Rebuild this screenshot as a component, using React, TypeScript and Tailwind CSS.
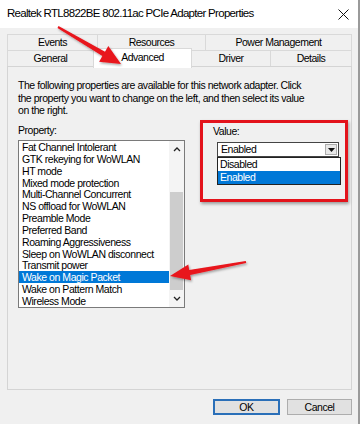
const properties = [
  "Fat Channel Intolerant",
  "GTK rekeying for WoWLAN",
  "HT mode",
  "Mixed mode protection",
  "Multi-Channel Concurrent",
  "NS offload for WoWLAN",
  "Preamble Mode",
  "Preferred Band",
  "Roaming Aggressiveness",
  "Sleep on WoWLAN disconnect",
  "Transmit power",
  "Wake on Magic Packet",
  "Wake on Pattern Match",
  "Wireless Mode",
];

const selected = "Wake on Magic Packet";

function Chevron({ down }: { down?: boolean }) {
  return (
    <svg width="8" height="5" viewBox="0 0 8 5">
      <path
        d={down ? "M1 1 L4 4 L7 1" : "M1 4 L4 1 L7 4"}
        fill="none"
        stroke="#222"
        strokeWidth="1.3"
      />
    </svg>
  );
}

export default function App() {
  return (
    <div className="relative w-[360px] h-[424px] overflow-hidden bg-[#f0f0f0] font-['Liberation_Sans',Arial,sans-serif] tracking-[-0.45px] text-black border-r-2 border-[#9a9a9a]">
      {/* title bar */}
      <div className="flex h-[28px] items-center justify-between bg-white pl-[7px] pr-[9px]">
        <span className="text-[11.5px] tracking-[-0.7px]">Realtek RTL8822BE 802.11ac PCIe Adapter Properties</span>
        <svg width="11" height="11" viewBox="0 0 11 11">
          <path d="M0.5 0.5 L10.5 10.5 M10.5 0.5 L0.5 10.5" stroke="#111" strokeWidth="1" />
        </svg>
      </div>

      {/* tabs */}
      <div className="mt-[6px] ml-[7px] w-[345px] text-[10.5px] leading-[15px] tracking-[-0.5px]">
        <div className="flex h-[16px]">
          <div className="w-[90px] border-l border-t border-[#d9d9d9] text-center">Events</div>
          <div className="w-[108px] border-l border-t border-[#d9d9d9] text-center">Resources</div>
          <div className="w-[147px] border-x border-t border-[#d9d9d9] text-center">Power Management</div>
        </div>
        <div className="flex h-[16px] items-start">
          <div className="h-[16px] w-[86px] border-l border-t border-[#d9d9d9] text-center">General</div>
          <div className="relative z-10 -mt-[2px] h-[20px] w-[99px] border-x border-t border-[#d9d9d9] bg-white pt-[1px] text-center">
            Advanced
          </div>
          <div className="h-[16px] w-[78px] border-t border-[#d9d9d9] text-center">Driver</div>
          <div className="h-[16px] w-[82px] border-x border-t border-[#d9d9d9] text-center">Details</div>
        </div>
      </div>

      {/* panel */}
      <div className="ml-[7px] h-[324px] w-[345px] border border-[#d4d4d4] bg-[#f0f0f0] pl-[10px] pt-[12px] text-[10.5px]">
        <div className="h-[41px] leading-[12.5px] whitespace-nowrap">
          The following properties are available for this network adapter. Click
          <br />
          the property you want to change on the left, and then select its value
          <br />
          on the right.
        </div>

        <div className="flex">
          <div className="w-[167px]">
            <div className="h-[20px] pt-[3px] leading-[14px]">Property:</div>
            <div className="flex h-[168px] border border-[#7a7a7a] bg-white">
              <div className="flex-1">
                {properties.map((p) => (
                  <div
                    key={p}
                    className={
                      p === selected
                        ? "h-[11.85px] bg-[#0078d7] pl-[3px] leading-[12px] text-white whitespace-nowrap"
                        : "h-[11.85px] pl-[3px] leading-[12px] whitespace-nowrap"
                    }
                  >
                    {p}
                  </div>
                ))}
              </div>
              <div className="flex w-[15px] flex-col bg-[#f4f4f4]">
                <div className="flex h-[17px] items-center justify-center">
                  <Chevron />
                </div>
                <div className="h-[34px]" />
                <div className="mx-[1px] h-[98px] bg-[#cdcdcd]" />
                <div className="flex-1" />
                <div className="flex h-[17px] items-center justify-center">
                  <Chevron down />
                </div>
              </div>
            </div>
          </div>

          <div className="ml-[15px] h-[82px] w-[148px] border-[3px] border-[#e3131b] pl-[10px] pt-[1px] shadow-[1px_2px_3px_rgba(0,0,0,0.35)]">
            <div className="leading-[14px]">Value:</div>
            <div className="ml-[4px] mt-[4px] flex h-[15px] w-[122px] border border-[#444] bg-white">
              <div className="flex-1 pl-[3px] leading-[13px]">Enabled</div>
              <div className="m-[1px] flex w-[12px] items-center justify-center border border-[#adadad] bg-[#e8e8e8]">
                <svg width="7" height="4" viewBox="0 0 7 4">
                  <path d="M0 0 L7 0 L3.5 4 Z" fill="#111" />
                </svg>
              </div>
            </div>
            <div className="ml-[4px] w-[124px] border border-[#222] bg-white">
              <div className="h-[13px] pl-[2px] leading-[13px]">Disabled</div>
              <div className="h-[13px] bg-[#0078d7] pl-[2px] leading-[13px] text-white">Enabled</div>
            </div>
          </div>
        </div>
      </div>

      {/* buttons */}
      <div className="mt-[9px] flex justify-end gap-[7px] pr-[6px] text-[10.5px]">
        <button className="h-[16px] w-[67px] border-2 border-[#2a6fb8] bg-[#e1e1e1] leading-[12px]">OK</button>
        <button className="h-[16px] w-[65px] border border-[#adadad] bg-[#e1e1e1] leading-[14px]">Cancel</button>
      </div>

      {/* annotation arrows */}
      <svg className="pointer-events-none absolute left-0 top-0 z-20" width="360" height="424" viewBox="0 0 360 424">
        <defs>
          <filter id="sh" x="-20%" y="-20%" width="140%" height="140%">
            <feDropShadow dx="1" dy="1.5" stdDeviation="1" floodColor="#000" floodOpacity="0.35" />
          </filter>
        </defs>
        <polygon
          filter="url(#sh)"
          fill="#e8141c"
          points="58.5,26.1 105,51.7 108.3,46.1 121,64 99.1,61.7 102.4,56.1 57.5,27.9"
        />
        <polygon
          filter="url(#sh)"
          fill="#e8141c"
          points="245.8,261 189.2,269.9 188.3,264.5 170,276 191.1,280.3 190.2,274.9 246.2,263"
        />
      </svg>
    </div>
  );
}
